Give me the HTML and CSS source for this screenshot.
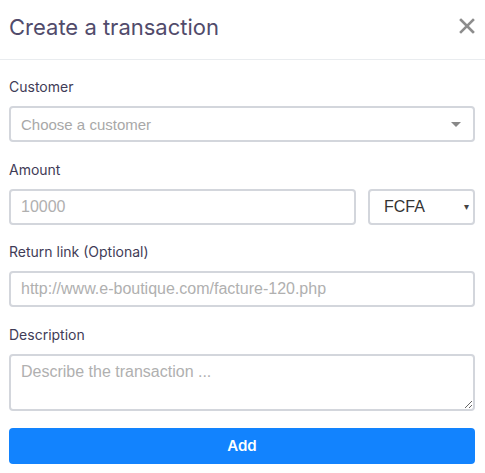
FILE: index.html
```html
<!DOCTYPE html>
<html lang="en">
<head>
    <meta charset="UTF-8">
    <meta name="viewport" content="width=device-width, initial-scale=1.0">
    <title>Create a transaction</title>
    <link rel="stylesheet" href="styles.css">
</head>
<body>

<div class="modal">
    <div class="modal-header">
        <h2 class="modal-title">Create a transaction</h2>
        <button class="close-button" aria-label="Close">
            <svg width="16" height="16" viewBox="0 0 16 16">
                <path d="M2 2 L14 14 M14 2 L2 14" stroke="#8d8d8d" stroke-width="2.6" stroke-linecap="square"/>
            </svg>
        </button>
    </div>

    <form class="modal-body">
        <div class="form-group">
            <label>Customer</label>
            <div class="select-box">
                <span class="placeholder">Choose a customer</span>
                <span class="caret"></span>
            </div>
        </div>

        <div class="form-group">
            <label>Amount</label>
            <div class="row">
                <input class="form-control" type="text" placeholder="10000">
                <div class="currency">
                    <span>FCFA</span>
                    <span class="small-caret">&#9662;</span>
                </div>
            </div>
        </div>

        <div class="form-group">
            <label>Return link (Optional)</label>
            <input class="form-control" type="text" placeholder="http://www.e-boutique.com/facture-120.php">
        </div>

        <div class="form-group last">
            <label>Description</label>
            <textarea class="form-control textarea" placeholder="Describe the transaction ..."></textarea>
        </div>

        <button type="button" class="add-button">Add</button>
    </form>
</div>

</body>
</html>
```

FILE: styles.css
```css
body {
    font-family: Inter, "Open Sans", sans-serif;
    margin: 0;
    background-color: #fff;
}
/* header */
.modal-header {
    display: flex;
    align-items: center;
    justify-content: space-between;
    height: 59px;
    padding: 0 9px;
    border-bottom: 1px solid #e9ecef;
}
.modal-title {
    margin: 0;
    font-size: 22px;
    font-weight: 400;
    color: #514b6b;
    padding-bottom: 5px;
}
.close-button {
    border: none;
    background: none;
    padding: 0;
    margin-right: 1px;
    margin-bottom: 7px;
    display: flex;
}
/* form */
.modal-body {
    padding: 17px 10px 0 9px;
}
.form-group {
    margin-bottom: 17.5px;
}
.form-group.last {
    margin-bottom: 17px;
}
.form-group label {
    display: block;
    font-size: 14px;
    line-height: 20px;
    color: #3f3c57;
    margin-bottom: 9px;
}
.form-control, .select-box, .currency {
    box-sizing: border-box;
    width: 100%;
    height: 36px;
    border: 2px solid #d3d6dc;
    border-radius: 4px;
    background: #fff;
    font-family: "Liberation Sans", Arial, sans-serif;
    font-size: 16px;
    padding: 0 10px;
    color: #333;
}
.form-control::placeholder {
    color: #b0b0b0;
}
.select-box {
    display: flex;
    align-items: center;
    justify-content: space-between;
    font-size: 15px;
}
.placeholder {
    color: #a8a8a8;
}
.caret {
    width: 0;
    height: 0;
    border-left: 5px solid transparent;
    border-right: 5px solid transparent;
    border-top: 5px solid #888;
    margin-right: 2px;
}
.row {
    display: flex;
    gap: 12px;
}
.row .form-control {
    flex: 1;
}
.currency {
    width: 107px;
    flex: none;
    display: flex;
    align-items: center;
    justify-content: space-between;
    padding: 0 4px 0 14px;
    color: #333;
}
.small-caret {
    font-size: 10px;
    color: #444;
}
.textarea {
    height: 57px;
    padding-top: 7px;
    resize: vertical;
    display: block;
}
/* button */
.add-button {
    width: 100%;
    height: 36px;
    border: none;
    border-radius: 4px;
    background-color: #1283fe;
    color: #fff;
    font-family: inherit;
    font-size: 15px;
    font-weight: 600;
    cursor: pointer;
}
```
